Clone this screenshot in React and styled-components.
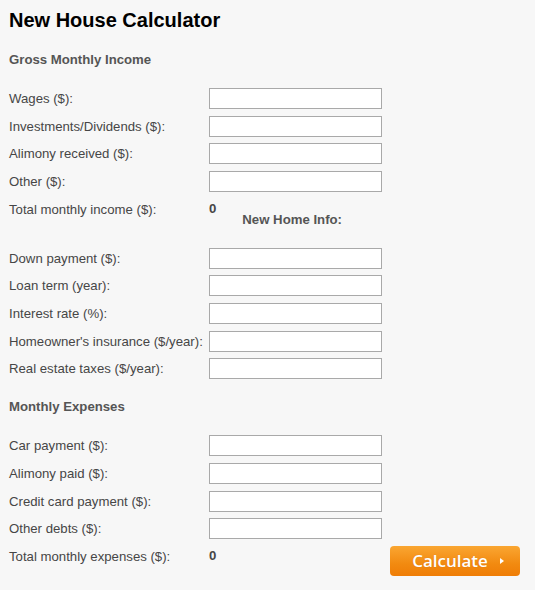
import React from 'react';
import styled, { createGlobalStyle } from 'styled-components';

const GlobalStyle = createGlobalStyle`
  html, body {
    margin: 0;
    padding: 0;
    background: #f7f7f7;
  }
  body {
    font-family: "Liberation Sans", Arial, sans-serif;
    font-size: 13.2px;
    color: #464646;
  }
`;

const incomeFields = ['Wages ($):', 'Investments/Dividends ($):', 'Alimony received ($):', 'Other ($):'];
const homeFields = [
  'Down payment ($):',
  'Loan term (year):',
  'Interest rate (%):',
  "Homeowner's insurance ($/year):",
  'Real estate taxes ($/year):',
];
const expenseFields = ['Car payment ($):', 'Alimony paid ($):', 'Credit card payment ($):', 'Other debts ($):'];

function Fields({ items }) {
  return items.map((label) => (
    <Row key={label}>
      <Label>{label}</Label>
      <Input type="text" />
    </Row>
  ));
}

function App() {
  return (
    <Page>
      <GlobalStyle />
      <Title>New House Calculator</Title>

      <SectionTitle $top={20}>Gross Monthly Income</SectionTitle>
      <Grid $top={20}>
        <Fields items={incomeFields} />
        <Row>
          <Label>Total monthly income ($):</Label>
          <ValueCell>
            <Value>0</Value>
            <SubTitle>New Home Info:</SubTitle>
          </ValueCell>
        </Row>
      </Grid>

      <Grid $top={20}>
        <Fields items={homeFields} />
      </Grid>

      <SectionTitle $top={20}>Monthly Expenses</SectionTitle>
      <Grid $top={20}>
        <Fields items={expenseFields} />
        <Row>
          <Label>Total monthly expenses ($):</Label>
          <Value>0</Value>
          <CalcButton type="button">
            Calculate
            <Arrow />
          </CalcButton>
        </Row>
      </Grid>
    </Page>
  );
}

const Page = styled.div`
  padding: 8px 9px 20px;
  min-height: 100vh;
  box-sizing: border-box;
`;

const Title = styled.h1`
  margin: 0;
  font-size: 20px;
  line-height: 24px;
  font-weight: bold;
  color: #000;
`;

const SectionTitle = styled.h2`
  margin: ${({ $top }) => $top}px 0 0;
  font-size: 13.2px;
  line-height: 16px;
  font-weight: bold;
  color: #555;
`;

const Grid = styled.div`
  margin-top: ${({ $top }) => $top}px;
  display: flex;
  flex-direction: column;
  gap: 6.67px;
`;

const Row = styled.div`
  display: flex;
  align-items: flex-start;
`;

const Label = styled.label`
  width: 200px;
  flex: none;
  line-height: 21px;
  white-space: nowrap;
`;

const Input = styled.input`
  width: 173px;
  height: 21px;
  box-sizing: border-box;
  margin: 0;
  padding: 1px 3px;
  border: 1px solid #a9a9a9;
  background: #fff;
  font: inherit;
  outline: none;
`;

const ValueCell = styled.div`
  display: flex;
  align-items: flex-start;
`;

const Value = styled.span`
  font-weight: bold;
  line-height: 19px;
`;

const SubTitle = styled.span`
  margin: 13px 0 0 26px;
  font-weight: bold;
  line-height: 16px;
  color: #555;
`;

const CalcButton = styled.button`
  margin: 0 6px 0 auto;
  width: 130px;
  height: 30px;
  display: flex;
  align-items: center;
  justify-content: center;
  gap: 12px;
  padding: 0 0 0 6px;
  border: none;
  border-radius: 4px;
  background: linear-gradient(#faa632, #f28a10 60%, #ef7d06);
  color: #fff;
  font-family: "Open Sans", "Liberation Sans", sans-serif;
  font-size: 17px;
  font-weight: 600;
  cursor: pointer;
  text-shadow: 0 0 1px rgba(160, 70, 0, 0.3);
`;

const Arrow = styled.span`
  width: 0;
  height: 0;
  border-top: 3px solid transparent;
  border-bottom: 3px solid transparent;
  border-left: 4px solid #fff;
`;

export default App;
